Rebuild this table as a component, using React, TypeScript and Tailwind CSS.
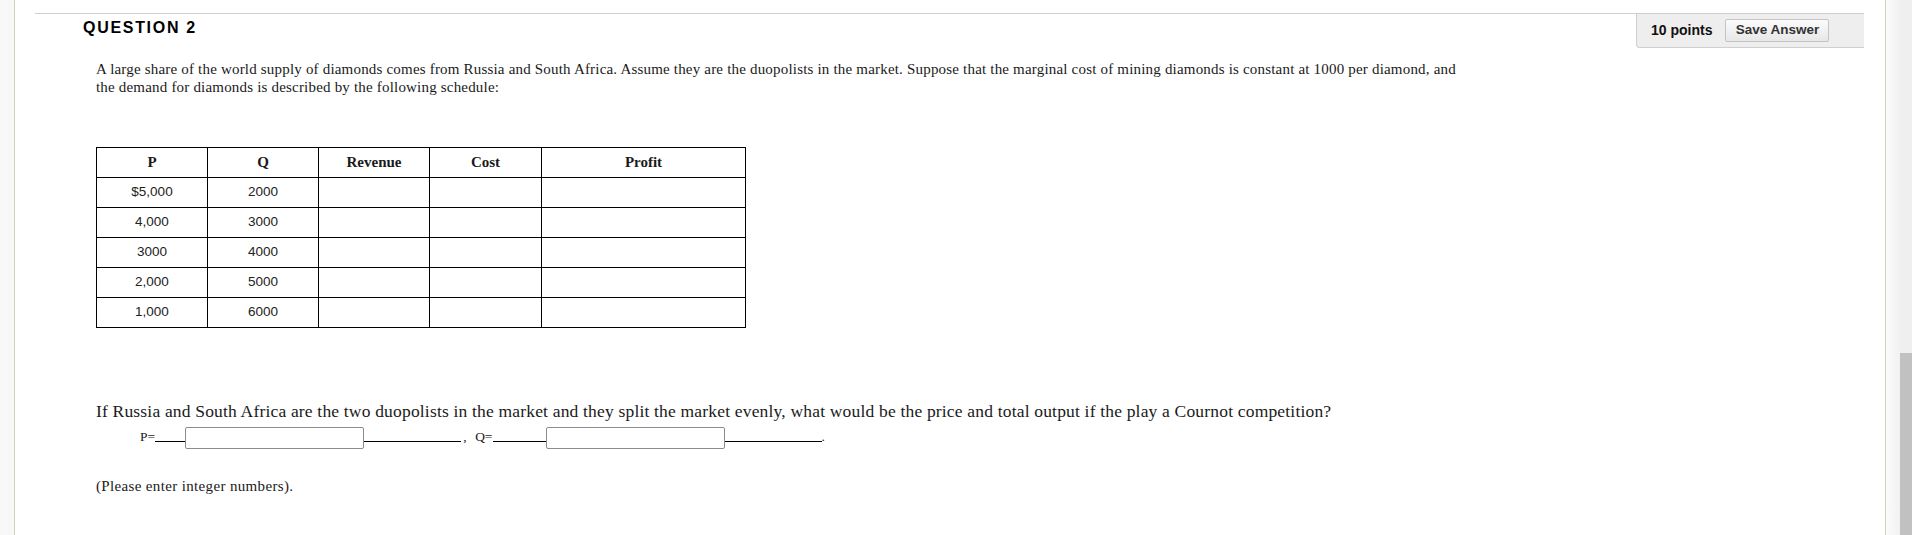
const rows = [
  ["$5,000", "2000"],
  ["4,000", "3000"],
  ["3000", "4000"],
  ["2,000", "5000"],
  ["1,000", "6000"],
];

const serif = "font-['Liberation_Serif',serif]";

const App = () => {
  return (
    <div className="flex h-[535px] w-full overflow-hidden bg-white text-[#1a1a1a]">
      {/* left frame edge */}
      <div className="w-[15px] shrink-0 border-r border-[#d6d1bb] bg-[#f8f8f8]" />

      <div className="flex-1 pt-[13px]">
        {/* question header */}
        <div className="ml-[20px] mr-[21px] flex">
          <div className="flex-1 border-t border-[#d0d0d0]">
            <h2 className="ml-[48px] mt-[4px] font-['Liberation_Sans',sans-serif] text-[16px] font-bold leading-[20px] tracking-[1.7px] text-black">
              QUESTION 2
            </h2>
          </div>
          <div className="flex h-[35px] w-[228px] items-center rounded-bl-[4px] border-b border-l border-t border-[#cfcfcf] bg-[#eeeeee] pl-[14px] font-['Liberation_Sans',sans-serif]">
            <span className="text-[14px] font-bold text-[#111]">10 points</span>
            <button className="ml-[13px] h-[23px] w-[104px] rounded-[2px] border border-[#c4c4c4] bg-gradient-to-b from-[#fbfbfb] to-[#e7e7e7] text-[13.5px] font-bold text-[#333]">
              Save Answer
            </button>
          </div>
        </div>

        <div className={`pl-[81px] ${serif}`}>
          <p className="mt-[13px] text-[15px] leading-[17.5px] tracking-[0.19px]">
            A large share of the world supply of diamonds comes from Russia and South Africa. Assume they are the duopolists in the market. Suppose that the marginal cost of mining diamonds is constant at 1000 per diamond, and
            <br />
            the demand for diamonds is described by the following schedule:
          </p>

          <table className="mt-[51px] border-collapse border border-black">
            <thead>
              <tr className="h-[30px]">
                {[
                  ["P", "w-[111px]"],
                  ["Q", "w-[111px]"],
                  ["Revenue", "w-[111px]"],
                  ["Cost", "w-[112px]"],
                  ["Profit", "w-[204px]"],
                ].map(([h, w]) => (
                  <th key={h} className={`${w} border border-black p-0 text-center text-[15px] font-bold`}>
                    {h}
                  </th>
                ))}
              </tr>
            </thead>
            <tbody className="font-['Liberation_Sans',sans-serif] text-[13.5px] text-[#222]">
              {rows.map(([p, q]) => (
                <tr key={p} className="h-[30px]">
                  <td className="border border-black p-0 text-center">{p}</td>
                  <td className="border border-black p-0 text-center">{q}</td>
                  <td className="border border-black p-0" />
                  <td className="border border-black p-0" />
                  <td className="border border-black p-0" />
                </tr>
              ))}
            </tbody>
          </table>

          <p className="mt-[73px] text-[17.5px] leading-[20px] tracking-[0.18px]">
            If Russia and South Africa are the two duopolists in the market and they split the market evenly, what would be the price and total output if the play a Cournot competition?
          </p>

          <div className="mt-[6px] flex h-[22px] items-end pl-[44px] text-[13.5px]">
            <span className="mb-[4px] leading-[16px]">P=</span>
            <span className="mb-[7px] h-px w-[30px] bg-black" />
            <input className="h-[22px] w-[179px] rounded-[2px] border border-[#8c8c8c] bg-white outline-none" />
            <span className="mb-[7px] h-px w-[97px] bg-black" />
            <span className="mb-[4px] w-[14px] pl-[2px] leading-[16px]">,</span>
            <span className="mb-[4px] leading-[16px]">Q=</span>
            <span className="mb-[7px] h-px w-[53px] bg-black" />
            <input className="h-[22px] w-[179px] rounded-[2px] border border-[#8c8c8c] bg-white outline-none" />
            <span className="mb-[7px] h-px w-[97px] bg-black" />
            <span className="mb-[4px] leading-[16px]">.</span>
          </div>

          <p className="mt-[28px] text-[15px] leading-[18px] tracking-[0.35px]">(Please enter integer numbers).</p>
        </div>
      </div>

      {/* right frame edge and page scrollbar */}
      <div className="w-[15px] shrink-0 border-l border-[#d6d1bb] bg-gradient-to-r from-[#fbfbfb] to-[#f1f1f1]" />
      <div className="flex w-[12px] shrink-0 flex-col bg-[#efefef]">
        <div className="h-[353px]" />
        <div className="flex-1 bg-[#c1c1c1]" />
      </div>
    </div>
  );
};

export default App;
